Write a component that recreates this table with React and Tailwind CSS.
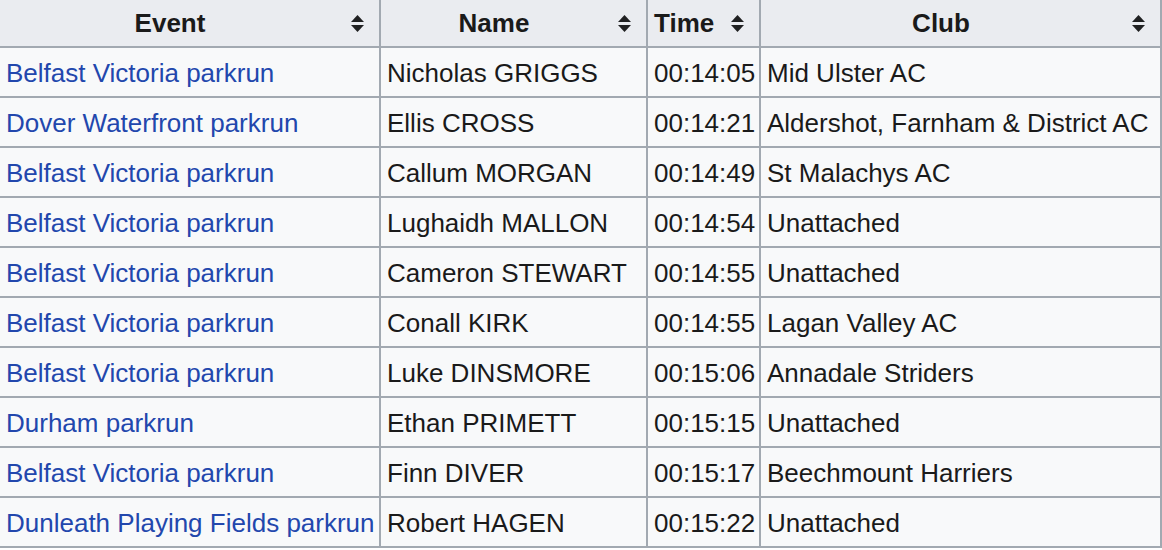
import React from "react";

const rows = [
  ["Belfast Victoria parkrun", "Nicholas GRIGGS", "00:14:05", "Mid Ulster AC"],
  ["Dover Waterfront parkrun", "Ellis CROSS", "00:14:21", "Aldershot, Farnham & District AC"],
  ["Belfast Victoria parkrun", "Callum MORGAN", "00:14:49", "St Malachys AC"],
  ["Belfast Victoria parkrun", "Lughaidh MALLON", "00:14:54", "Unattached"],
  ["Belfast Victoria parkrun", "Cameron STEWART", "00:14:55", "Unattached"],
  ["Belfast Victoria parkrun", "Conall KIRK", "00:14:55", "Lagan Valley AC"],
  ["Belfast Victoria parkrun", "Luke DINSMORE", "00:15:06", "Annadale Striders"],
  ["Durham parkrun", "Ethan PRIMETT", "00:15:15", "Unattached"],
  ["Belfast Victoria parkrun", "Finn DIVER", "00:15:17", "Beechmount Harriers"],
  ["Dunleath Playing Fields parkrun", "Robert HAGEN", "00:15:22", "Unattached"],
];

function SortIcon() {
  return (
    <svg width="15" height="19" viewBox="0 0 15 19" className="shrink-0">
      <polygon points="1,8 7.5,1 14,8" fill="#202122" />
      <polygon points="1,11 7.5,18 14,11" fill="#202122" />
    </svg>
  );
}

function HeaderCell({ label }) {
  return (
    <div className="h-[46px] bg-[#eaecf0] flex items-center pl-[6px] pr-[14px] gap-[16px]">
      <span className="flex-1 text-center font-bold">{label}</span>
      <SortIcon />
    </div>
  );
}

function Cell({ children, link }) {
  return (
    <div className={"h-[48px] bg-[#f8f9fa] flex items-center pl-[6px] pr-[4px] pt-[2px] whitespace-nowrap " + (link ? "text-[#2247ad]" : "")}>
      {children}
    </div>
  );
}

export default function App() {
  return (
    <div
      className="w-[1162px] h-[550px] overflow-hidden bg-white text-[#1a1a1a] text-[26px] leading-none"
      style={{ fontFamily: '"Liberation Sans", Arial, sans-serif' }}
    >
      <div className="grid grid-cols-[379px_265px_111px_399px] gap-[2px] bg-[#a2a9b1] pr-[2px] pb-[2px] w-[1162px]">
        <HeaderCell label="Event" />
        <HeaderCell label="Name" />
        <HeaderCell label="Time" />
        <HeaderCell label="Club" />
        {rows.map((r, i) => (
          <React.Fragment key={i}>
            <Cell link>{r[0]}</Cell>
            <Cell>{r[1]}</Cell>
            <Cell>{r[2]}</Cell>
            <Cell>{r[3]}</Cell>
          </React.Fragment>
        ))}
      </div>
    </div>
  );
}
